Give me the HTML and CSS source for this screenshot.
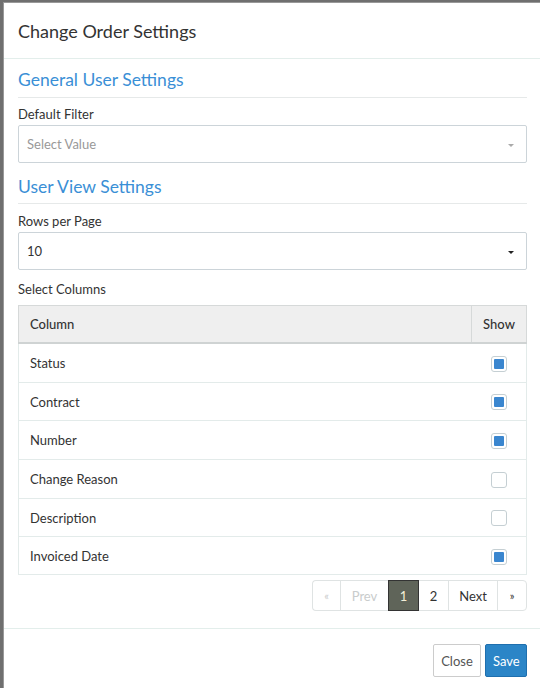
FILE: index.html
```html
<!DOCTYPE html>
<html>
<head>
<meta charset="utf-8">
<link rel="stylesheet" href="styles.css">
</head>
<body>
<div class="modal">
  <div class="modal-header">
    <h3 class="modal-title">Change Order Settings</h3>
  </div>
  <div class="modal-body">
    <h4 class="section first">General User Settings</h4>
    <label class="field-label first-label">Default Filter</label>
    <div class="select">
      <span class="placeholder">Select Value</span>
      <span class="caret light"></span>
    </div>
    <h4 class="section">User View Settings</h4>
    <label class="field-label">Rows per Page</label>
    <div class="select">
      <span class="value">10</span>
      <span class="caret"></span>
    </div>
    <label class="field-label cols-label">Select Columns</label>
    <table class="cols">
      <thead>
        <tr><th class="col-name">Column</th><th class="col-show">Show</th></tr>
      </thead>
      <tbody>
        <tr><td>Status</td><td class="cb-cell"><span class="cb on"></span></td></tr>
        <tr><td>Contract</td><td class="cb-cell"><span class="cb on"></span></td></tr>
        <tr><td>Number</td><td class="cb-cell"><span class="cb on"></span></td></tr>
        <tr><td>Change Reason</td><td class="cb-cell"><span class="cb"></span></td></tr>
        <tr><td>Description</td><td class="cb-cell"><span class="cb"></span></td></tr>
        <tr><td>Invoiced Date</td><td class="cb-cell"><span class="cb on"></span></td></tr>
      </tbody>
    </table>
    <div class="pager-row">
      <ul class="pager">
        <li class="disabled first-item">«</li>
        <li class="disabled prev">Prev</li>
        <li class="active">1</li>
        <li class="num">2</li>
        <li class="next">Next</li>
        <li class="last-item">»</li>
      </ul>
    </div>
  </div>
  <div class="modal-footer">
    <button class="btn btn-default">Close</button>
    <button class="btn btn-primary">Save</button>
  </div>
</div>
</body>
</html>
```
FILE: styles.css
```css
html, body {
  margin: 0;
  padding: 0;
}
body {
  background: #6f6f6f;
  padding: 2px 0 0 3px;
  height: 688px;
  box-sizing: border-box;
  overflow: hidden;
  font-family: Lato, "Open Sans", "Liberation Sans", sans-serif;
  color: #333;
}
.modal {
  background: #fff;
  width: 540px;
  height: 700px;
  box-sizing: border-box;
  border-left: 1px solid #999;
  border-top: 1px solid #999;
}
.modal-header {
  height: 55px;
  border-bottom: 1px solid #e3eeeb;
  display: flex;
  align-items: center;
  padding: 0 14px;
}
.modal-title {
  margin: 0;
  font-size: 18px;
  font-weight: 400;
  color: #333;
  padding-top: 1px;
}
.modal-body {
  padding: 10px 16px 17px 14px;
  border-bottom: 1px solid #e3eeeb;
}
.section {
  margin: 13px 0 0;
  font-size: 17.5px;
  font-weight: 400;
  line-height: 22px;
  color: #3a8fd6;
  padding-bottom: 5px;
  border-bottom: 1px solid #e6e9e9;
}
.section.first {
  margin-top: 0;
  padding-bottom: 6px;
}
.field-label {
  display: block;
  font-size: 13px;
  line-height: 18px;
  margin: 8px 0 2px;
  color: #333;
}
.field-label.first-label {
  margin-top: 7px;
}
.field-label.cols-label {
  margin: 10px 0 7px;
}
.select {
  height: 38px;
  box-sizing: border-box;
  border: 1px solid #ccd4d9;
  border-radius: 2px;
  display: flex;
  align-items: center;
  justify-content: space-between;
  padding: 0 12px 0 8px;
  font-size: 13px;
}
.placeholder {
  color: #999;
}
.value {
  color: #333;
}
.caret {
  width: 0;
  height: 0;
  border-left: 3px solid transparent;
  border-right: 3px solid transparent;
  border-top: 3px solid #222;
  margin-top: 2px;
}
.caret.light {
  border-top-color: #aaa;
}
table.cols {
  width: 100%;
  border-collapse: collapse;
  font-size: 13px;
}
table.cols th {
  background: #efefef;
  font-weight: 500;
  text-align: left;
  height: 36px;
  padding: 0 11px;
  border: 1px solid #d6d9d9;
  border-bottom: 2px solid #cfd3d3;
  color: #333;
}
table.cols th.col-show {
  width: 34px;
  text-align: center;
  padding: 0 10px;
}
table.cols td {
  height: 37.7px;
  padding: 0 11px;
  border-bottom: 1px solid #e3ebea;
  color: #333;
}
table.cols td:first-child {
  border-left: 1px solid #e3ebea;
}
table.cols td:last-child {
  border-right: 1px solid #e3ebea;
}
table.cols tr:last-child td {
  height: 37px;
}
.cb-cell {
  text-align: center;
}
.cb {
  display: inline-flex;
  align-items: center;
  justify-content: center;
  width: 16px;
  height: 16px;
  box-sizing: border-box;
  border: 1px solid #c5cfd3;
  border-radius: 3px;
  vertical-align: middle;
}
.cb.on::after {
  content: "";
  width: 10px;
  height: 10px;
  background: #3a86cf;
  border-radius: 1px;
}
.pager-row {
  display: flex;
  justify-content: flex-end;
  margin-top: 5px;
}
.pager {
  list-style: none;
  margin: 0;
  padding: 0;
  display: flex;
  font-size: 13px;
}
.pager li {
  height: 31px;
  box-sizing: border-box;
  border: 1px solid #dfe3e3;
  margin-left: -1px;
  display: flex;
  align-items: center;
  justify-content: center;
  color: #333;
}
.pager li.first-item {
  width: 29px;
  border-radius: 4px 0 0 4px;
  font-size: 11px;
  border-right-color: #c8ced2;
}
.pager li.prev {
  width: 49px;
}
.pager li.active {
  width: 31px;
  background: #5f6459;
  border-color: #333;
  color: #f3efd8;
  position: relative;
}
.pager li.num {
  width: 31px;
}
.pager li.next {
  width: 50px;
}
.pager li.last-item {
  width: 30px;
  border-radius: 0 4px 4px 0;
  font-size: 11px;
}
.pager li.disabled {
  color: #c9cccc;
}
.modal-footer {
  display: flex;
  justify-content: flex-end;
  gap: 4px;
  padding: 15px 16px 0 0;
}
.btn {
  height: 33px;
  box-sizing: border-box;
  font-family: Lato, "Open Sans", "Liberation Sans", sans-serif;
  font-size: 13px;
  border-radius: 2px;
  padding: 0 7px;
  cursor: pointer;
}
.btn-default {
  background: #fff;
  border: 1px solid #ccc;
  color: #555;
  width: 48px;
}
.btn-primary {
  background: #2b85c7;
  border: 1px solid #1f6fae;
  color: #fff;
  width: 42px;
}
```
